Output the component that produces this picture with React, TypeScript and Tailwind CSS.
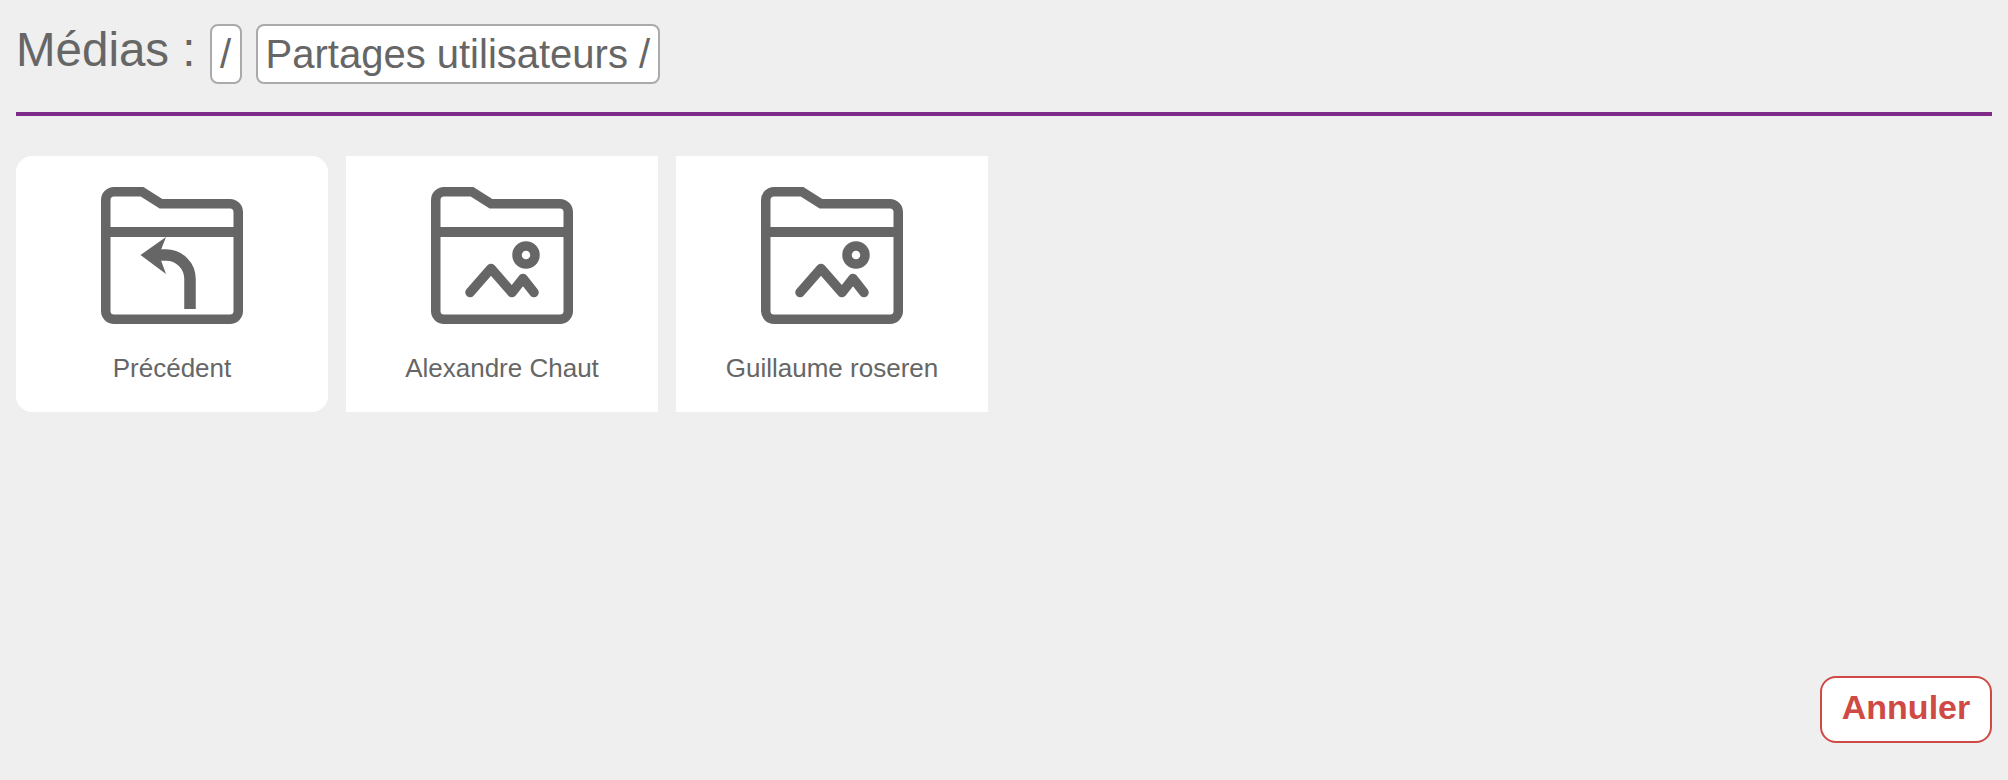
const folders = [
  { id: "back", label: "Précédent", back: true },
  { id: "alexandre", label: "Alexandre Chaut", back: false },
  { id: "guillaume", label: "Guillaume roseren", back: false },
];

function FolderIcon({ back }: { back: boolean }) {
  return (
    <svg width="142" height="137" viewBox="0 0 142 137" fill="none" stroke="#666666">
      <path
        d="M13 4.75H41L60 16.75H129a8.25 8.25 0 0 1 8.25 8.25V124a8.25 8.25 0 0 1-8.25 8.25H13A8.25 8.25 0 0 1 4.75 124V13A8.25 8.25 0 0 1 13 4.75Z"
        strokeWidth="9.5"
      />
      <path d="M4.75 45H137.25" strokeWidth="10" />
      {back ? (
        <>
          <path d="M89 122V92a24 24 0 0 0-24-24H54" strokeWidth="11.5" />
          <path d="M39.5 68L65 50L58 68L65 87Z" fill="#666666" stroke="none" />
        </>
      ) : (
        <>
          <circle cx="95" cy="68" r="9" strokeWidth="9.5" />
          <path
            d="M39 105.5L60 81.5L81 105.5L92 91.5L103 105.5"
            strokeWidth="9.5"
            strokeLinecap="round"
            strokeLinejoin="round"
          />
        </>
      )}
    </svg>
  );
}

export default function App() {
  return (
    <div className="flex h-screen flex-col bg-[#efefef] px-4 font-['Liberation_Sans',Arial,sans-serif] text-[#666666]">
      <div className="flex items-center gap-[14px] pt-6">
        <span className="pb-2 text-[47.5px] leading-[52px]">Médias :</span>
        <button className="w-8 rounded-lg border-2 border-[#aaaaaa] bg-white py-[5px] text-center text-[40px] leading-[46px]">/</button>
        <button className="rounded-lg border-2 border-[#aaaaaa] bg-white px-2 py-[5px] text-[40px] leading-[46px]">
          Partages utilisateurs /
        </button>
      </div>

      <div className="mt-7 h-1 bg-[#7f2b8a]" />

      <div className="mt-10 flex gap-[18px]">
        {folders.map((folder) => (
          <div
            key={folder.id}
            className={`flex h-64 w-[312px] flex-col items-center bg-white pt-[31px] ${folder.back ? "rounded-2xl" : ""}`}
          >
            <FolderIcon back={folder.back} />
            <div className="mt-[29px] text-[26px] leading-[30px]">{folder.label}</div>
          </div>
        ))}
      </div>

      <div className="mt-auto flex justify-end pb-[37px]">
        <button className="h-[67px] w-[172px] rounded-2xl border-2 border-[#cf4a45] bg-white pb-1 text-[34px] font-bold text-[#cf4a45]">
          Annuler
        </button>
      </div>
    </div>
  );
}
